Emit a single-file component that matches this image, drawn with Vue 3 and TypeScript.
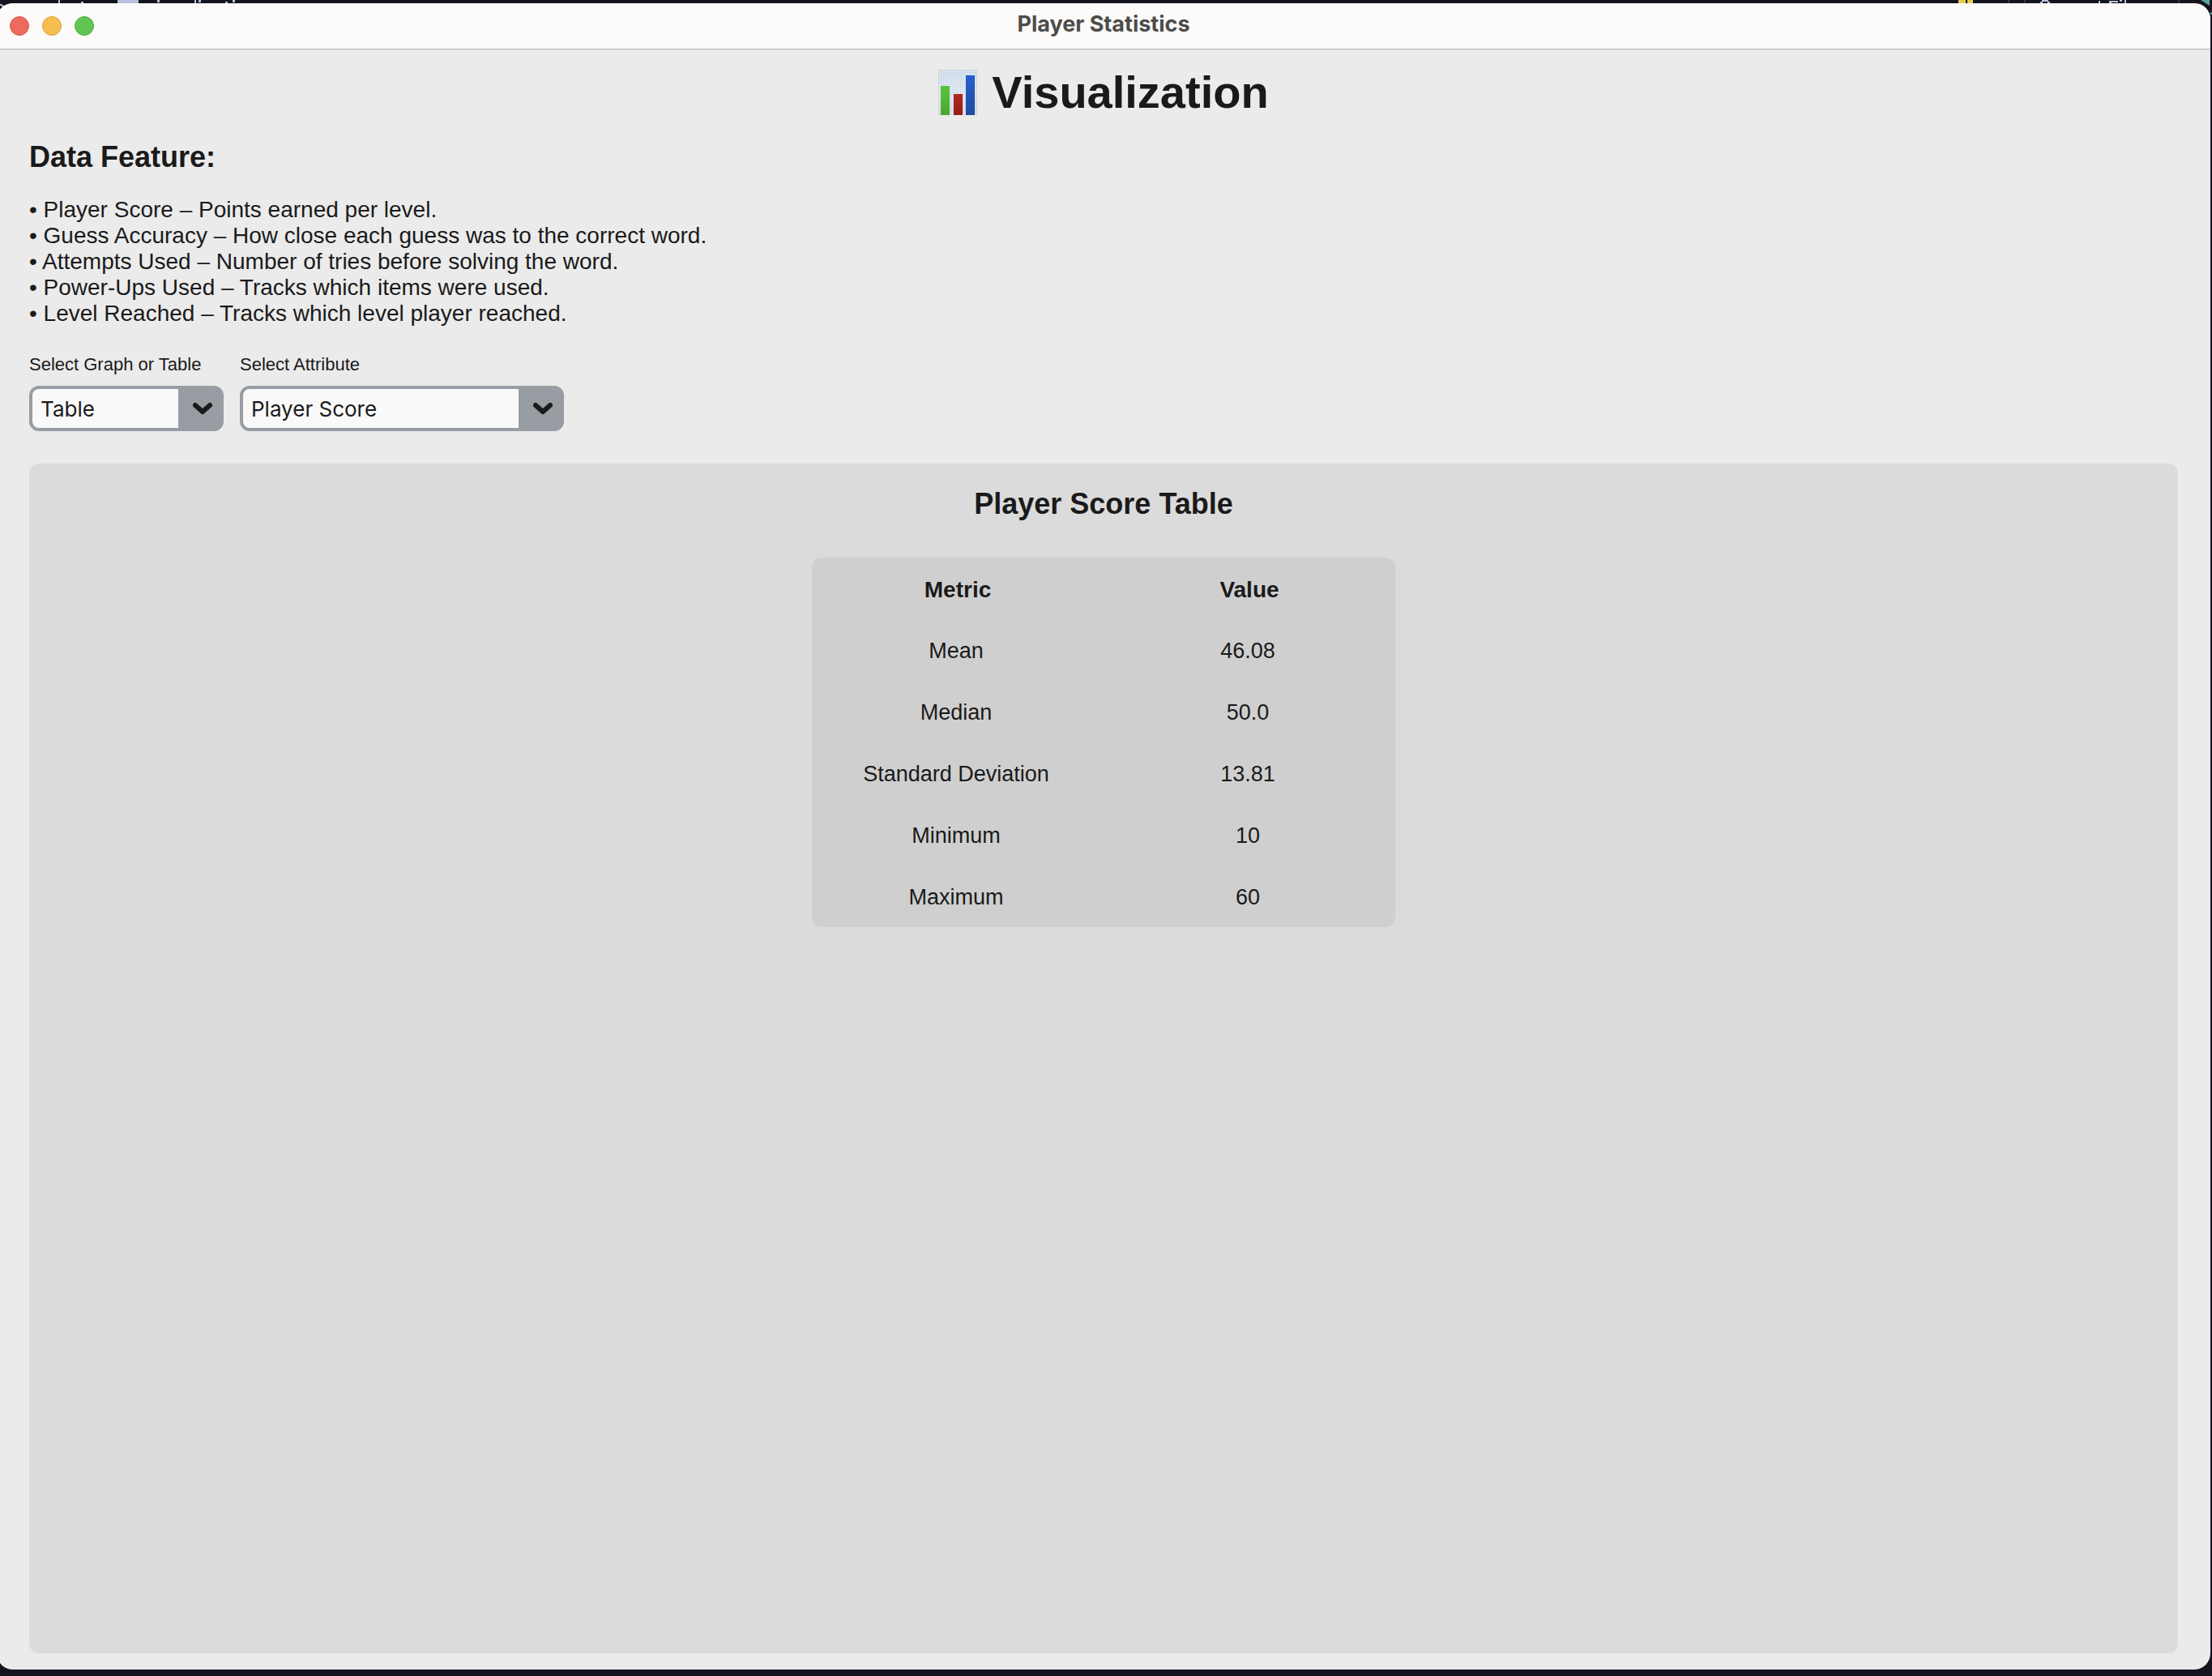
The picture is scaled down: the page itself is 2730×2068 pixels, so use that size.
<script setup lang="ts">
import { ref } from 'vue'

interface Stat {
  metric: string
  value: string
}

const features: string[] = [
  'Player Score – Points earned per level.',
  'Guess Accuracy – How close each guess was to the correct word.',
  'Attempts Used – Number of tries before solving the word.',
  'Power-Ups Used – Tracks which items were used.',
  'Level Reached – Tracks which level player reached.',
]

const views: string[] = ['Table', 'Graph']
const attributes: string[] = [
  'Player Score',
  'Guess Accuracy',
  'Attempts Used',
  'Power-Ups Used',
  'Level Reached',
]

const view = ref('Table')
const attribute = ref('Player Score')

const stats: Stat[] = [
  { metric: 'Mean', value: '46.08' },
  { metric: 'Median', value: '50.0' },
  { metric: 'Standard Deviation', value: '13.81' },
  { metric: 'Minimum', value: '10' },
  { metric: 'Maximum', value: '60' },
]
</script>

<template>
  <div class="desktop">
    <!-- slivers of the editor behind the window -->
    <svg class="behind behind-left" width="300" height="14" aria-hidden="true">
      <path d="M0 6q4 0 5 4" fill="none" stroke="#b9c0dd" stroke-width="2" />
      <g fill="#b9c0dd">
        <rect x="72" width="2" height="4" />
        <rect x="100" y="2" width="3" height="2" />
        <rect x="145" width="26" height="4" />
        <rect x="194" width="3" height="3" />
        <rect x="240" width="2" height="4" />
        <rect x="245" width="3" height="3" />
        <rect x="278" y="2" width="3" height="2" />
        <rect x="287" width="3" height="3" />
      </g>
    </svg>
    <svg class="behind behind-right" width="330" height="24" aria-hidden="true">
      <g fill="#e8cb4f">
        <rect x="17" width="9" height="4" />
        <rect x="28" width="7" height="4" />
      </g>
      <g fill="#353545">
        <rect x="78" width="2" height="4" />
        <rect x="98" width="2" height="4" />
        <rect x="288" width="2" height="4" />
      </g>
      <g fill="#b9c0dd">
        <rect x="120" width="8" height="2" />
        <rect x="118" y="2" width="3" height="2" />
        <rect x="127" y="2" width="3" height="2" />
        <rect x="190" y="1" width="2" height="3" />
        <rect x="203" y="1" width="11" height="2" />
        <rect x="203" y="1" width="3" height="3" />
        <rect x="216" width="3" height="2" />
        <rect x="222" width="2" height="4" />
      </g>
      <path d="M316 0h11v7zM314 4l3 2-1 2zM326 17l4-2v3z" fill="#5aa79c" />
    </svg>

    <div class="window">
      <header class="titlebar">
        <div class="lights">
          <button class="light close" type="button" aria-label="Close"></button>
          <button class="light minimize" type="button" aria-label="Minimize"></button>
          <button class="light zoom" type="button" aria-label="Zoom"></button>
        </div>
        <span class="window-title">Player Statistics</span>
      </header>

      <main class="content">
        <h1 class="heading">
          <svg width="48" height="56" viewBox="0 0 48 56" aria-hidden="true">
            <defs>
              <linearGradient id="paper" x1="0" y1="0" x2="0" y2="1">
                <stop offset="0" stop-color="#d9e4ef" />
                <stop offset="0.5" stop-color="#e6ecf3" />
                <stop offset="1" stop-color="#dde2e8" />
              </linearGradient>
              <linearGradient id="green" x1="0" y1="0" x2="0" y2="1">
                <stop offset="0" stop-color="#5bc43f" />
                <stop offset="1" stop-color="#4ba533" />
              </linearGradient>
              <linearGradient id="red" x1="0" y1="0" x2="0" y2="1">
                <stop offset="0" stop-color="#b5261c" />
                <stop offset="1" stop-color="#981d14" />
              </linearGradient>
              <linearGradient id="blue" x1="0" y1="0" x2="0" y2="1">
                <stop offset="0" stop-color="#275fcb" />
                <stop offset="1" stop-color="#1f4ba2" />
              </linearGradient>
              <pattern id="grid" width="3" height="3" patternUnits="userSpaceOnUse">
                <path d="M0 .5h3M.5 0v3" stroke="#b4cbe0" stroke-opacity=".35" />
              </pattern>
            </defs>
            <rect width="48" height="56" fill="url(#paper)" />
            <rect width="48" height="56" fill="url(#grid)" />
            <path d="M.5 56V.5h47V56" fill="none" stroke="#cfd4d9" />
            <rect x="3" y="20" width="11" height="36" fill="url(#green)" />
            <rect x="19" y="30" width="11" height="26" fill="url(#red)" />
            <rect x="34" y="7" width="11" height="49" fill="url(#blue)" />
          </svg>
          <span>Visualization</span>
        </h1>

        <h2 class="subheading">Data Feature:</h2>
        <ul class="features">
          <li v-for="feature in features" :key="feature">• {{ feature }}</li>
        </ul>

        <form class="controls" @submit.prevent>
          <div class="field">
            <label for="view">Select Graph or Table</label>
            <div class="combo narrow">
              <select id="view" v-model="view">
                <option v-for="item in views" :key="item">{{ item }}</option>
              </select>
              <svg class="chevron" width="24" height="16" viewBox="0 0 24 16" aria-hidden="true">
                <path d="M3 4l9 8 9-8" />
              </svg>
            </div>
          </div>
          <div class="field">
            <label for="attribute">Select Attribute</label>
            <div class="combo wide">
              <select id="attribute" v-model="attribute">
                <option v-for="item in attributes" :key="item">{{ item }}</option>
              </select>
              <svg class="chevron" width="24" height="16" viewBox="0 0 24 16" aria-hidden="true">
                <path d="M3 4l9 8 9-8" />
              </svg>
            </div>
          </div>
        </form>

        <section class="panel">
          <h2 class="panel-title">{{ attribute }} {{ view }}</h2>
          <table class="stats">
            <thead>
              <tr>
                <th scope="col">Metric</th>
                <th scope="col">Value</th>
              </tr>
            </thead>
            <tbody>
              <tr v-for="stat in stats" :key="stat.metric">
                <td>{{ stat.metric }}</td>
                <td>{{ stat.value }}</td>
              </tr>
            </tbody>
          </table>
        </section>
      </main>
    </div>
  </div>
</template>

<style>
body {
  margin: 0;
  background: #14141f;
}
</style>

<style scoped>
.desktop {
  position: relative;
  display: flex;
  box-sizing: border-box;
  min-height: 100vh;
  padding: 4px 2px 8px 0;
  overflow: hidden;
  background: #14141f;
  color: #1a1a1a;
  font-family: "Liberation Sans", Arial, sans-serif;
}

.behind {
  position: absolute;
  top: 0;
}

.behind-left {
  left: 0;
}

.behind-right {
  right: 0;
}

.window {
  position: relative;
  display: flex;
  flex: 1;
  flex-direction: column;
  margin-left: -4px;
  overflow: hidden;
  border-radius: 20px;
  background: #ebebeb;
}

.titlebar {
  display: grid;
  grid-template-columns: 1fr auto 1fr;
  align-items: center;
  height: 56px;
  border-bottom: 1px solid #c1c1c1;
  box-shadow: 0 1px #dcdcdc;
  background: #fcfbf9;
}

.lights {
  display: flex;
  gap: 16px;
  padding-left: 16px;
}

.light {
  width: 24px;
  height: 24px;
  padding: 0;
  border: 1px solid;
  border-radius: 50%;
}

.close {
  border-color: #d8554a;
  background: #ec6a5e;
}

.minimize {
  border-color: #d9a23c;
  background: #f5bf4f;
}

.zoom {
  border-color: #4fac3d;
  background: #61c554;
}

.window-title {
  padding-bottom: 4px;
  color: #4c4c4b;
  font: 700 27px/32px Inter, sans-serif;
}

.content {
  display: flex;
  flex: 1;
  flex-direction: column;
  padding: 23px 40px 20px;
}

.heading {
  display: flex;
  align-items: center;
  justify-content: center;
  gap: 18px;
  margin: 0 0 30px;
  font-size: 56px;
  line-height: 60px;
}

.subheading {
  margin: 0 0 29px;
  font-size: 36px;
  line-height: 40px;
}

.features {
  margin: 0 0 33px;
  padding: 0;
  font-size: 28px;
  line-height: 32px;
  list-style: none;
}

.controls {
  display: flex;
  gap: 20px;
  margin-bottom: 40px;
}

.field {
  display: flex;
  flex-direction: column;
  gap: 12px;
}

.field label {
  font-size: 22px;
  line-height: 28px;
  white-space: nowrap;
}

.combo {
  position: relative;
}

.narrow {
  width: 240px;
}

.wide {
  width: 400px;
}

.combo select {
  display: block;
  box-sizing: border-box;
  width: 100%;
  height: 56px;
  padding: 2px 10px 0;
  border: 4px solid #979da2;
  border-right-width: 56px;
  border-radius: 12px;
  appearance: none;
  background: #f9f9fa;
  color: #1a1a1a;
  font: 26px/32px Inter, sans-serif;
}

.chevron {
  position: absolute;
  top: 20px;
  right: 14px;
  fill: none;
  stroke: #1a1a1a;
  stroke-width: 6px;
  stroke-linecap: round;
  stroke-linejoin: round;
  pointer-events: none;
}

.panel {
  display: flex;
  flex: 1;
  flex-direction: column;
  align-items: center;
  padding: 29px 20px;
  border-radius: 12px;
  background: #dbdbdb;
}

.panel-title {
  margin: 0 0 45px;
  font-size: 36px;
  line-height: 42px;
}

.stats {
  width: 720px;
  max-width: 100%;
  border-spacing: 0;
  border-radius: 12px;
  background: #cfcfcf;
  table-layout: fixed;
}

.stats th,
.stats td {
  box-sizing: border-box;
  height: 76px;
  line-height: 32px;
  text-align: center;
}

.stats th {
  padding: 4px 0 0;
  font-size: 28px;
}

.stats td {
  padding: 2px 4px 0 0;
  font-size: 27px;
}
</style>
